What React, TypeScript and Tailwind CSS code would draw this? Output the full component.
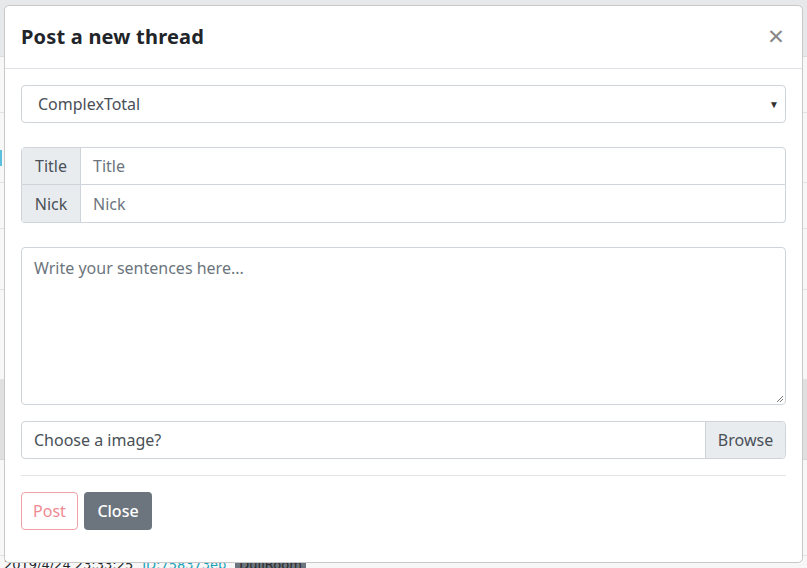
import React from "react";

const font = { fontFamily: '"Noto Sans", "Liberation Sans", sans-serif' };

const BackgroundPage = () => {
  // what's visible of the thread list behind the dialog
  return (
    <div className="flex flex-col h-[568px] bg-[#f7f7f7] overflow-hidden">
      <div className="h-[57px] shrink-0 bg-[#e6e8ea] border-b border-[#dcdcdc]" />
      <div className="h-[56px] shrink-0 border-b border-[#e2e2e2]" />
      <div className="h-[70px] shrink-0 border-b border-[#e2e2e2] flex items-start pt-[37px]">
        <div className="w-[2px] h-[16px] bg-[#5bc0de]" />
      </div>
      <div className="h-[46px] shrink-0 border-b border-[#e2e2e2]" />
      <div className="h-[61px] shrink-0 border-b border-[#e2e2e2]" />
      <div className="h-[90px] shrink-0 border-b border-[#e2e2e2]" />
      <div className="h-[80px] shrink-0 bg-[#e0e0e0] border-b border-[#d6d6d6]" />
      <div className="h-[96px] shrink-0 border-b border-[#e2e2e2]" />
      <div className="shrink-0 flex items-start pl-[4px] text-[13px] leading-[18px] text-[#212529] gap-[9px]" style={{ fontFamily: '"DejaVu Sans", sans-serif' }}>
        <span>2019/4/24 23:33:25</span>
        <span className="text-[#17a2b8]">ID:758373ep</span>
        <span className="bg-[#6c757d] text-[#2a2a2a] px-1 rounded-sm">DullRoom</span>
      </div>
    </div>
  );
};

const NewThreadModal = () => {
  return (
    <div
      className="absolute left-[4px] top-[5px] w-[799px] h-[558px] bg-white border border-[#c8c8c8] rounded-[5px] flex flex-col"
      style={font}
    >
      <div className="flex items-center justify-between px-4 h-[63px] border-b border-[#dee2e6]">
        <h5 className="text-[20px] font-bold text-[#212529] leading-[30px] tracking-[0.2px]">Post a new thread</h5>
        <span className="text-[28px] leading-none text-[#888] mr-[2px] mt-[-4px]">×</span>
      </div>

      <div className="px-4 pt-4 flex flex-col">
        <div className="relative h-[38px] border border-[#ced4da] rounded-[4px] flex items-center pl-4 text-[16px] text-[#495057]">
          ComplexTotal
          <span className="absolute right-[6px] top-[11px] text-[10px] text-[#333]">▼</span>
        </div>

        <div className="mt-[24px] flex flex-col">
          <div className="flex h-[38px] border border-[#ced4da] rounded-t-[4px]">
            <div className="w-[59px] bg-[#e9ecef] border-r border-[#ced4da] flex items-center justify-center text-[16px] text-[#495057]">Title</div>
            <div className="flex-1 flex items-center pl-3 text-[16px] text-[#6c757d]">Title</div>
          </div>
          <div className="flex h-[38px] border border-t-0 border-[#ced4da] rounded-b-[4px]">
            <div className="w-[59px] bg-[#e9ecef] border-r border-[#ced4da] flex items-center justify-center text-[16px] text-[#495057]">Nick</div>
            <div className="flex-1 flex items-center pl-3 text-[16px] text-[#6c757d]">Nick</div>
          </div>
        </div>

        <div className="relative mt-[24px] h-[158px] border border-[#ced4da] rounded-[4px] px-3 pt-[8px] text-[16px] text-[#6c757d]">
          Write your sentences here...
          <svg className="absolute right-[1px] bottom-[1px]" width="10" height="10" viewBox="0 0 10 10">
            <path d="M9 3 L3 9 M9 6 L6 9" stroke="#777" strokeWidth="1" />
          </svg>
        </div>

        <div className="mt-[16px] flex h-[38px] border border-[#ced4da] rounded-[4px] text-[16px] text-[#495057]">
          <div className="flex-1 flex items-center pl-3">Choose a image?</div>
          <div className="w-[80px] bg-[#e9ecef] border-l border-[#ced4da] rounded-r-[4px] flex items-center justify-center">Browse</div>
        </div>

        <hr className="mt-[16px] border-t border-[#e5e5e5]" />

        <div className="mt-[16px] flex gap-[6px]">
          <button className="h-[38px] w-[57px] border border-[#f0a1a8] text-[#ef8a93] rounded-[4px] text-[16px]">Post</button>
          <button className="h-[38px] w-[68px] bg-[#6c757d] text-white rounded-[4px] text-[16px] font-medium">Close</button>
        </div>
      </div>
    </div>
  );
};

export default function App() {
  return (
    <div className="relative w-[807px] h-[568px] overflow-hidden">
      <BackgroundPage />
      <NewThreadModal />
    </div>
  );
}
